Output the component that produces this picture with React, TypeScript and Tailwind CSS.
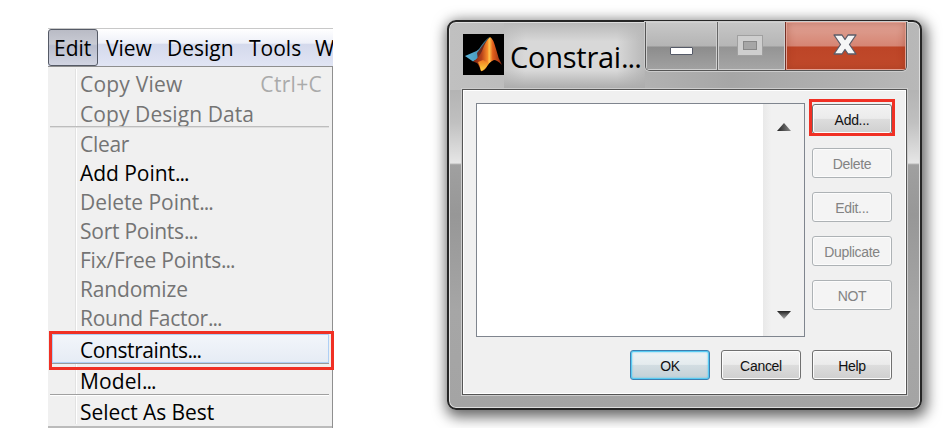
import React from 'react';

type Row = { label: string; h: string; on?: boolean; keys?: string; sep?: boolean; sp: string };

const items: Row[] = [
  { label: 'Copy View', h: 'h-[30px]', keys: 'Ctrl+C', sp: 'tracking-[0.2px]' },
  { label: 'Copy Design Data', h: 'h-[30px]', sep: true, sp: 'tracking-[0.08px]' },
  { label: 'Clear', h: 'h-[29px]', sp: 'tracking-[-0.3px]' },
  { label: 'Add Point...', h: 'h-[29px]', on: true, sp: 'tracking-[-0.05px]' },
  { label: 'Delete Point...', h: 'h-[29px]', sp: 'tracking-[-0.05px]' },
  { label: 'Sort Points...', h: 'h-[29px]', sp: 'tracking-[-0.25px]' },
  { label: 'Fix/Free Points...', h: 'h-[29px]', sp: 'tracking-[-0.22px]' },
  { label: 'Randomize', h: 'h-[29px]', sp: 'tracking-[-0.18px]' },
  { label: 'Round Factor...', h: 'h-[27px]', sp: 'tracking-[-0.25px]' },
];

function Label({ text }: { text: string }) {
  const dots = text.endsWith('...');
  return (
    <span>
      {dots ? text.slice(0, -3) : text}
      {dots && <span className="tracking-[-1px]">...</span>}
    </span>
  );
}

function Item({ label, h, on, keys, sep, sp }: Row) {
  return (
    <div className={`${h} relative shrink-0 flex justify-between pl-8 pr-[10px] text-[21px] leading-[29px] whitespace-nowrap ${sp} ${on ? 'text-black' : 'text-[#747474]'}`}>
      <Label text={label} />
      {keys && <span className="text-[#aaa] tracking-[0.3px]">{keys}</span>}
      {sep && <i className="absolute left-[2px] right-[3px] bottom-[2px] h-[2px] bg-[#bdbdbd] border-b border-[#dedede]" />}
    </div>
  );
}

function Menu() {
  return (
    <section className="relative ml-12 mt-7 w-[285px] h-[400px] shrink-0 font-['Open_Sans','Noto_Sans',sans-serif]">
      <div className="h-[38px] flex overflow-hidden whitespace-nowrap border-t border-[#c8c8c8] bg-[linear-gradient(#ffffff,#eef0f8_38%,#d4d9ec_42%,#e1e5f4)] text-[21px] leading-[38px] text-black">
        <div className="w-[50px] h-[37px] shrink-0 rounded-[3px] border border-[#555a66] bg-[linear-gradient(#b9bbc5,#c9cbd4_40%,#b9bdcd_45%,#d2d5e2)] pl-[5px] leading-[37px]">Edit</div>
        <span className="w-[61px] shrink-0 pl-[8px]">View</span>
        <span className="w-[82px] shrink-0 pl-[8px]">Design</span>
        <span className="w-[67px] shrink-0 pl-[8px]">Tools</span>
        <span className="pl-[7px]">W</span>
      </div>
      <div className="relative h-[362px] flex flex-col bg-[#f0f0f0] border-t border-r border-[#8f8f8f] pt-[3px]">
        <i className="absolute left-[27px] top-[2px] bottom-[4px] w-[2px] border-l border-[#e2e2e2] bg-white" />
        {items.map((x) => <Item key={x.label} {...x} />)}
        <div className="relative h-[39px] -mr-[2px] ml-[1px] border-[3px] border-[#f03024] shrink-0 z-10">
          <div className="h-[29px] mr-[2px] border border-[#aecff5] bg-linear-to-b from-[#f2f5fa] to-[#e6ecf5] pl-[27px] text-[21px] leading-[30px] tracking-[-0.42px]"><Label text="Constraints..." /></div>
          <div className="h-px mr-[2px] bg-[#999]" />
        </div>
        <div className="relative h-[31px] shrink-0 pl-8 text-[21px] leading-[23px] tracking-[0.1px]"><Label text="Model..." />
          <i className="absolute left-[2px] right-[3px] top-[24px] h-[2px] bg-[#a0a0a0] border-b border-white" />
        </div>
        <div className="h-[26px] shrink-0 pl-8 text-[21px] leading-[22px] tracking-[-0.06px]">Select As Best</div>
        <i className="absolute bottom-0 left-0 right-0 h-[2px] bg-[#bbb]" />
      </div>
    </section>
  );
}

function Btn({ label, kind = 'normal' }: { label: string; kind?: 'normal' | 'off' | 'ok' }) {
  const look = kind === 'off'
    ? 'border-[#adb2b5] bg-[#f4f4f4] text-[#838383] shadow-[inset_0_0_0_1px_#fcfcfc]'
    : kind === 'ok'
    ? 'border-[#3c7fb1] bg-[linear-gradient(#eef3f5,#e4ebee_48%,#d2dde2_50%,#c3d0d6)] shadow-[inset_0_0_0_1px_#58cbf3,inset_0_0_2px_1px_#58cbf3] text-[#111]'
    : 'border-[#707070] bg-[linear-gradient(#f3f3f3,#ebebeb_48%,#dddddd_50%,#cfcfcf)] shadow-[inset_0_0_0_1px_#fcfcfc] text-[#111]';
  return <button className={`w-20 h-[30px] shrink-0 rounded-[3px] border font-['Liberation_Sans',sans-serif] text-[14px] tracking-[-0.3px] leading-[30px] ${look}`}>{label}</button>;
}

function Logo() {
  return (
    <svg className="w-[41px] h-[41px] shrink-0" viewBox="0 0 41 41">
      <defs>
        <linearGradient id="peak" x1="0" x2="1" y1="0" y2="0">
          <stop offset="0" stopColor="#7a2412" /><stop offset=".3" stopColor="#b8421a" /><stop offset=".5" stopColor="#f88a2a" /><stop offset=".56" stopColor="#ffc850" /><stop offset=".68" stopColor="#e4601c" /><stop offset="1" stopColor="#8c2410" />
        </linearGradient>
        <linearGradient id="wing" x1="0" x2="1"><stop offset="0" stopColor="#5bb5da" /><stop offset=".5" stopColor="#4a9cc0" /><stop offset="1" stopColor="#28505f" /></linearGradient>
        <linearGradient id="tip" x1="0" x2="0" y1="0" y2="1"><stop offset="0" stopColor="#f07a20" /><stop offset="1" stopColor="#ffd840" /></linearGradient>
      </defs>
      <path fill="#000" d="M0 0h41v41H0z" />
      <path fill="url(#wing)" d="M2 22 10 18.500Q13 18 16 15Q21 7 26 3L22 14L16 24L10 27.500Z" />
      <path fill="#6b2a20" d="M14 19Q19 12 25 5L22 20L15 26Z" />
      <path fill="url(#peak)" d="M10 27.500Q16 24 19 17Q23 6 27 3Q30 4 33 15Q35 24 39 31Q34 26 31 26Q26 28 23 34Q20 38 18 37Q16 31 14 29Z" />
      <path fill="url(#tip)" d="M15 28 20 26 26 29Q21 37 18 37Q17 32 15 28Z" />
    </svg>
  );
}

export default function App() {
  return (
    <main className="w-[946px] h-[428px] bg-white flex overflow-hidden">
      <Menu />
      <section className="ml-[114px] mt-5 w-[475px] h-[390px] shrink-0 flex flex-col rounded-[9px] border-2 border-[#262626] bg-[linear-gradient(#bcbcbc,#b2b2b2_12%,#b4b4b4_18%,#c0c0c0_26%,#e6e6e6_36.5%,#a0a0a0_37%,#979797_50%,#a6a6a6_75%,#a4a4a4)] shadow-[inset_0_0_0_1px_#dedede,2px_4px_14px_3px_#00000099]">
        <header className="h-[67px] shrink-0 flex pl-[14px] pr-[13px] mx-px mt-px -mb-px bg-[linear-gradient(90deg,#c0c0c0,#b6b6b6_35%,#a6a6a6_60%,#b8b8b8)] rounded-t-[6px]">
          <div className="-ml-px pt-[11px]"><Logo /></div>
          <div className="w-[141px] pl-[6px] pt-[10px] h-[66px] shrink-0 font-['Open_Sans','Noto_Sans',sans-serif] text-[29px] leading-[48px] tracking-[-0.25px] whitespace-nowrap text-black bg-[linear-gradient(#b9b9b9,transparent_28%,transparent_72%,#ababab),linear-gradient(90deg,#c6c6c6,#d8d8d8_15%,#d8d8d8_80%,#b8b8b8)]"><Label text="Constrai..." /></div>
          <div className="-mt-px h-[49px] w-[262px] flex shrink-0 rounded-b-[5px] border border-t-0 border-[#555] overflow-hidden shadow-[0_0_0_1px_#ccc]">
            <div className="w-[72px] flex justify-center border-r border-[#666] shadow-[inset_0_0_0_1px_#d0d0d0] bg-[linear-gradient(#c8c8c8,#b4b4b4_50%,#8c8c8c_52%,#a2a2a2)]"><i className="mt-[25px] -ml-px w-[23px] h-[8px] bg-white border border-[#555a68] rounded-[1px]" /></div>
            <div className="w-[68px] flex justify-center border-r border-[#753026] shadow-[inset_0_0_0_1px_#cfcfcf] bg-[linear-gradient(#c6c6c6,#b6b6b6_50%,#949494_52%,#a6a6a6)]"><i className="mt-[14px] -ml-[3px] w-[24px] h-[19px] border-[5px] border-[#cecece] outline outline-[#a0a0a0] bg-[#a6a6a6] shadow-[inset_0_0_0_1px_#888]" /></div>
            <div className="flex-1 flex justify-center shadow-[inset_0_0_0_1px_#e2a294,inset_0_0_8px_#8a2e1880] bg-[linear-gradient(#e0a598,#d68573_50%,#bd4527_52%,#c14a2b)]">
              <svg className="mt-[12px] -ml-[2px] w-6 h-[22px]" viewBox="0 0 24 22"><path d="M1 1h8L12 5.500l3-4.500H23l-6.500 9.500L23 20h-8L12 15.500 9 20H1l6.500-9.500z" fill="#f6f6f6" stroke="#5c5c68" strokeWidth="1.300" strokeLinejoin="round" /></svg>
            </div>
          </div>
        </header>
        <div className="mx-[13px] h-[306px] shrink-0 border border-[#555] outline outline-[#ccc] bg-[#f0f0f0] shadow-[inset_0_0_0_1px_white] pt-[13px] pl-[13px]">
          <div className="flex">
            <div className="w-[329px] h-[234px] border border-[#7f858e] bg-white flex justify-end">
              <div className="w-[41px] h-full bg-[linear-gradient(90deg,#e9e9e9,#f1f1f1_20%)] flex flex-col items-center justify-between pt-[19px] pb-[17px]">
                <svg className="w-[14px] h-2" viewBox="0 0 14 8"><defs><linearGradient id="arrow"><stop offset="0" stopColor="#222" /><stop offset="1" stopColor="#888" /></linearGradient></defs><path d="M0 8 7 0 14 8z" fill="url(#arrow)" /></svg>
                <svg className="w-[14px] h-2" viewBox="0 0 14 8"><defs><linearGradient id="arrowDown" x1="0" x2="0" y1="0" y2="1"><stop offset="0" stopColor="#222" /><stop offset="1" stopColor="#aaa" /></linearGradient></defs><path d="M0 0 7 8 14 0z" fill="url(#arrowDown)" /></svg>
              </div>
            </div>
            <div className="relative ml-[7px] pt-px flex flex-col gap-[14px]">
              <Btn label="Add..." />
              <Btn label="Delete" kind="off" />
              <Btn label="Edit..." kind="off" />
              <Btn label="Duplicate" kind="off" />
              <Btn label="NOT" kind="off" />
              <i className="absolute -left-[3px] -top-[4px] w-[86px] h-[37px] border-[3px] border-[#f03024]" />
            </div>
          </div>
          <div className="mt-[13px] ml-[154px] flex gap-[11px]"><Btn label="OK" kind="ok" /><Btn label="Cancel" /><Btn label="Help" /></div>
        </div>
      </section>
    </main>
  );
}
